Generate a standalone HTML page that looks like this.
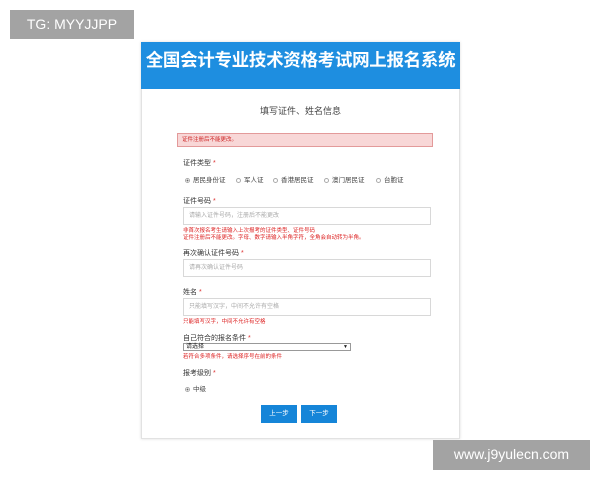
<!DOCTYPE html>
<html><head><meta charset="utf-8"><style>
*{margin:0;padding:0;box-sizing:border-box}
body{width:600px;height:480px;background:#fff;position:relative;overflow:hidden;font-family:"Liberation Sans","Noto Sans CJK SC",sans-serif;}
.a{position:absolute}
.wm{background:#a3a3a3;color:#fff;font-size:14px;line-height:29px;text-align:center}
.card{left:141px;top:42px;width:319px;height:397px;border:1px solid #e2e2e2;box-shadow:0 0 3px #ddd;background:#fff}
.hd{left:141px;top:42px;width:319px;height:47px;background:#1e8ee0;color:#fff;font-size:17.5px;font-weight:bold;text-align:center;line-height:36px;letter-spacing:-0.3px}
.lb{left:183px;font-size:7px;color:#333}
.lb b{color:#d33;font-weight:normal}
.in{left:183px;width:248px;height:18px;border:1px solid #d8d8d8;font-size:6px;color:#aaa;padding-left:5px;line-height:16px}
.r{color:#d22;font-size:5.5px;left:183px}
.rad{font-size:6.5px;color:#444;top:174px}
.dot{display:inline-block;width:5px;height:5px;border:1px solid #aaa;border-radius:50%;margin-right:3px;vertical-align:middle}
.btn{top:405px;width:36px;height:18px;background:#1585d8;color:#fff;font-size:6.5px;text-align:center;line-height:18px}
</style></head><body>
<div class="a wm" style="left:10px;top:10px;width:124px;height:29px">TG: MYYJJPP</div>
<div class="a card"></div>
<div class="a hd">全国会计专业技术资格考试网上报名系统</div>
<div class="a" style="left:141px;top:104px;width:319px;text-align:center;font-size:9px;color:#444">填写证件、姓名信息</div>
<div class="a" style="left:177px;top:133px;width:256px;height:14px;background:#f8d7d7;border:1px solid #e39a9a;font-size:5.5px;color:#c22;line-height:12px;padding-left:4px">证件注册后不能更改。</div>
<div class="a lb" style="top:158px">证件类型 <b>*</b></div>
<div class="a rad" style="left:185px"><span class="dot" style="background:radial-gradient(#666 35%,#fff 45%)"></span>居民身份证</div>
<div class="a rad" style="left:236px"><span class="dot"></span>军人证</div>
<div class="a rad" style="left:273px"><span class="dot"></span>香港居民证</div>
<div class="a rad" style="left:324px"><span class="dot"></span>澳门居民证</div>
<div class="a rad" style="left:376px"><span class="dot"></span>台胞证</div>
<div class="a lb" style="top:196px">证件号码 <b>*</b></div>
<div class="a in" style="top:207px">请输入证件号码，注册后不能更改</div>
<div class="a r" style="top:226px">非首次报名考生请输入上次报考的证件类型、证件号码</div>
<div class="a r" style="top:233px">证件注册后不能更改。字母、数字请输入半角字符，全角会自动转为半角。</div>
<div class="a lb" style="top:248px">再次确认证件号码 <b>*</b></div>
<div class="a in" style="top:259px">请再次确认证件号码</div>
<div class="a lb" style="top:287px">姓名 <b>*</b></div>
<div class="a in" style="top:298px">只能填写汉字，中间不允许有空格</div>
<div class="a r" style="top:317px">只能填写汉字，中间不允许有空格</div>
<div class="a lb" style="top:333px">自己符合的报名条件 <b>*</b></div>
<div class="a" style="left:183px;top:343px;width:168px;height:8px;border:1px solid #999;font-size:6px;line-height:6px;color:#222;padding-left:2px">请选择<span style="position:absolute;right:2px;font-size:5px">▼</span></div>
<div class="a r" style="top:352px">若符合多项条件，请选择序号在前的条件</div>
<div class="a lb" style="top:368px">报考级别 <b>*</b></div>
<div class="a rad" style="left:185px;top:383px"><span class="dot" style="background:radial-gradient(#666 35%,#fff 45%)"></span>中级</div>
<div class="a btn" style="left:261px">上一步</div>
<div class="a btn" style="left:301px">下一步</div>
<div class="a wm" style="left:433px;top:440px;width:157px;height:30px">www.j9yulecn.com</div>
</body></html>
